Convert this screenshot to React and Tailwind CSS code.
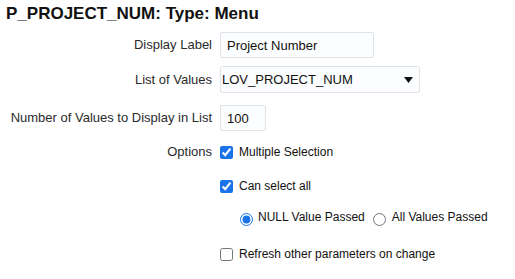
import React from 'react';

const Label = ({ children }) => (
  <div className="w-[212px] shrink-0 text-right text-[13px] text-[#2b2b2b]">{children}</div>
);

const App = () => {
  return (
    <div className="w-[515px] h-[279px] bg-white overflow-hidden text-[#222]" style={{ fontFamily: '"Liberation Sans", Arial, sans-serif' }}>
      <h1 className="pl-[6px] pt-[4px] text-[17px] leading-[20px] font-bold text-[#111]">P_PROJECT_NUM: Type: Menu</h1>

      <div className="mt-[8px] flex items-center gap-[8px]">
        <Label>Display Label</Label>
        <input
          className="w-[154px] h-[26px] border border-[#dfe3e8] rounded-[2px] bg-[#fcfdfe] px-[6px] text-[13px] text-[#111] outline-none"
          defaultValue="Project Number"
        />
      </div>

      <div className="mt-[8px] flex items-center gap-[8px]">
        <Label>List of Values</Label>
        <div className="w-[200px] h-[27px] border border-[#dfe3e8] rounded-[2px] bg-[#fcfdfe] flex items-center justify-between pl-[1px] pr-[6px] text-[13px] text-[#111]">
          <span>LOV_PROJECT_NUM</span>
          <svg width="9" height="6" viewBox="0 0 9 6"><path d="M0 0h9L4.5 6z" fill="#111" /></svg>
        </div>
      </div>

      <div className="mt-[12px] flex items-center gap-[8px]">
        <Label>Number of Values to Display in List</Label>
        <input
          className="w-[46px] h-[26px] border border-[#dfe3e8] rounded-[2px] bg-[#fcfdfe] px-[6px] text-[13px] text-[#111] outline-none"
          defaultValue="100"
        />
      </div>

      <div className="mt-[13px] flex items-center gap-[8px] h-[16px]">
        <Label>Options</Label>
        <label className="flex items-center gap-[6px] text-[12px] text-[#111]">
          <input type="checkbox" defaultChecked className="m-0 w-[13px] h-[13px] accent-[#1a73e8]" />
          Multiple Selection
        </label>
      </div>

      <div className="mt-[18px] pl-[220px] h-[16px] flex items-center">
        <label className="flex items-center gap-[6px] text-[12px] text-[#111]">
          <input type="checkbox" defaultChecked className="m-0 w-[13px] h-[13px] accent-[#1a73e8]" />
          Can select all
        </label>
      </div>

      <div className="mt-[15px] pl-[240px] h-[16px] flex items-center gap-[8px] text-[12px] text-[#111]">
        <label className="flex items-center gap-[5px]">
          <input type="radio" name="nv" defaultChecked className="m-0 w-[13px] h-[13px] accent-[#1a73e8] translate-y-[2px]" />
          NULL Value Passed
        </label>
        <label className="flex items-center gap-[6px]">
          <input type="radio" name="nv" className="m-0 w-[13px] h-[13px] accent-[#1a73e8] translate-y-[2px]" />
          All Values Passed
        </label>
      </div>

      <div className="mt-[21px] pl-[220px] h-[16px] flex items-center">
        <label className="flex items-center gap-[6px] text-[12px] text-[#111]">
          <input type="checkbox" className="m-0 w-[13px] h-[13px]" />
          Refresh other parameters on change
        </label>
      </div>
    </div>
  );
};

export default App;
